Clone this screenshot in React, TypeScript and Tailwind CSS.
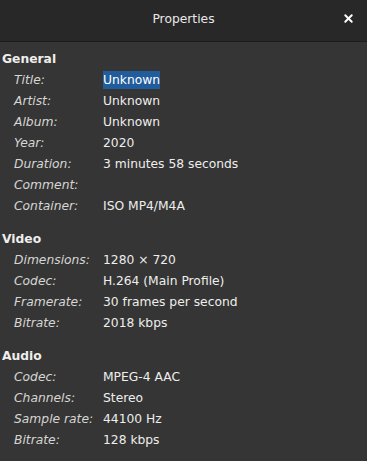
import { X } from "lucide-react";

type Row = { label: string; value: string; selected?: boolean };

const sections: { title: string; rows: Row[] }[] = [
    {
        title: "General",
        rows: [
            { label: "Title:", value: "Unknown", selected: true },
            { label: "Artist:", value: "Unknown" },
            { label: "Album:", value: "Unknown" },
            { label: "Year:", value: "2020" },
            { label: "Duration:", value: "3 minutes 58 seconds" },
            { label: "Comment:", value: "" },
            { label: "Container:", value: "ISO MP4/M4A" },
        ],
    },
    {
        title: "Video",
        rows: [
            { label: "Dimensions:", value: "1280 × 720" },
            { label: "Codec:", value: "H.264 (Main Profile)" },
            { label: "Framerate:", value: "30 frames per second" },
            { label: "Bitrate:", value: "2018 kbps" },
        ],
    },
    {
        title: "Audio",
        rows: [
            { label: "Codec:", value: "MPEG-4 AAC" },
            { label: "Channels:", value: "Stereo" },
            { label: "Sample rate:", value: "44100 Hz" },
            { label: "Bitrate:", value: "128 kbps" },
        ],
    },
];

export default function App() {
    return (
        <div className="w-[367px] h-[461px] overflow-hidden bg-[#353535] text-[12.3px] text-[#eeeeec] font-['DejaVu_Sans',sans-serif] flex flex-col">
            <div className="h-[42px] shrink-0 bg-[#282828] border-b border-[#1c1c1c] flex items-center justify-center relative pb-[3px]">
                <span className="text-[#e8e8e8]">Properties</span>
                <X size={13} strokeWidth={3.5} className="absolute right-[12px] top-[12px] text-white" />
            </div>
            <div className="flex flex-col gap-[12px] pt-[7px]">
                {sections.map((s) => (
                    <div key={s.title} className="flex flex-col">
                        <div className="h-[21px] leading-[21px] pl-[2px] font-bold">{s.title}</div>
                        {s.rows.map((r) => (
                            <div key={s.title + r.label} className="h-[21px] leading-[21px] flex">
                                <span className="w-[103px] pl-[14px] italic text-[#d6d6d4]">{r.label}</span>
                                <span>
                                    {r.selected ? (
                                        <span className="bg-[#215d9c] text-white py-[2px]">{r.value}</span>
                                    ) : (
                                        r.value
                                    )}
                                </span>
                            </div>
                        ))}
                    </div>
                ))}
            </div>
        </div>
    );
}
